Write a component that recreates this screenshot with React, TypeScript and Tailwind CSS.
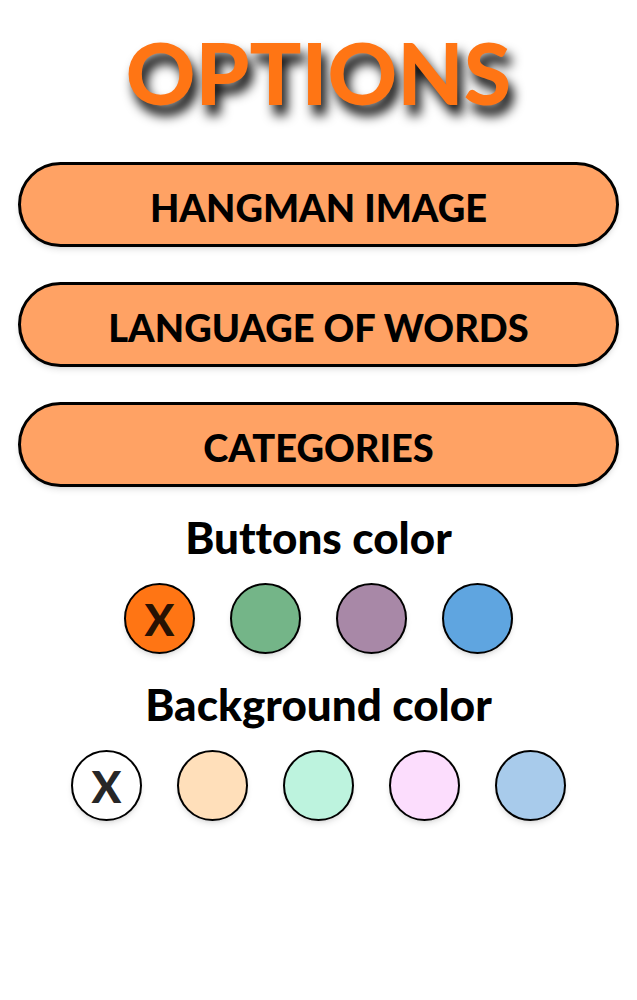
import { useState } from "react";

const MENU_ITEMS = ["HANGMAN IMAGE", "LANGUAGE OF WORDS", "CATEGORIES"];

const BUTTON_COLORS = [
  { name: "orange", className: "bg-[#ff7514]" },
  { name: "green", className: "bg-[#74b588]" },
  { name: "purple", className: "bg-[#a888a7]" },
  { name: "blue", className: "bg-[#5fa5e0]" },
];

const BACKGROUND_COLORS = [
  { name: "white", className: "bg-white" },
  { name: "peach", className: "bg-[#ffdfba]" },
  { name: "mint", className: "bg-[#bdf3de]" },
  { name: "pink", className: "bg-[#fcddfd]" },
  { name: "sky", className: "bg-[#a8cbeb]" },
];

type ColorPickerProps = {
  title: string;
  group: string;
  colors: { name: string; className: string }[];
};

const ColorPicker = ({ title, group, colors }: ColorPickerProps) => {
  const [selected, setSelected] = useState(colors[0].name);

  return (
    <fieldset className="w-full">
      <legend className="w-full pt-5 pb-4 text-center text-[44px] leading-[60px] font-black">
        {title}
      </legend>
      <div className="flex flex-wrap justify-center gap-[35px]">
        {colors.map((color) => (
          <label
            key={color.name}
            className={`flex size-[71px] cursor-pointer items-center justify-center rounded-full border-2 border-black shadow-md ${color.className}`}
          >
            <input
              type="radio"
              name={group}
              value={color.name}
              aria-label={color.name}
              checked={selected === color.name}
              onChange={() => setSelected(color.name)}
              className="sr-only"
            />
            {selected === color.name && (
              <span className="text-[44px] leading-[44px] font-black text-black/85">
                X
              </span>
            )}
          </label>
        ))}
      </div>
    </fieldset>
  );
};

const App = () => {
  return (
    <main className="flex min-h-screen flex-col items-center bg-white px-[18px] pt-[22px] pb-10 font-['Comic_Sans_MS','Lato',sans-serif] text-black [font-variant-ligatures:none]">
      <h1 className="text-[86px] leading-[100px] font-black text-[#ff7514] [text-shadow:5px_10px_12px_rgba(0,0,0,1)]">
        OPTIONS
      </h1>

      <nav className="mt-10 flex w-full flex-col gap-[35px]">
        {MENU_ITEMS.map((item) => (
          <button
            key={item}
            type="button"
            className="h-[85px] w-full cursor-pointer rounded-full border-[3px] border-black bg-[#ffa264] pt-1 text-[38px] leading-[44px] font-black shadow-md"
          >
            {item}
          </button>
        ))}
      </nav>

      <ColorPicker
        title="Buttons color"
        group="buttons-color"
        colors={BUTTON_COLORS}
      />
      <ColorPicker
        title="Background color"
        group="background-color"
        colors={BACKGROUND_COLORS}
      />
    </main>
  );
};

export default App;
